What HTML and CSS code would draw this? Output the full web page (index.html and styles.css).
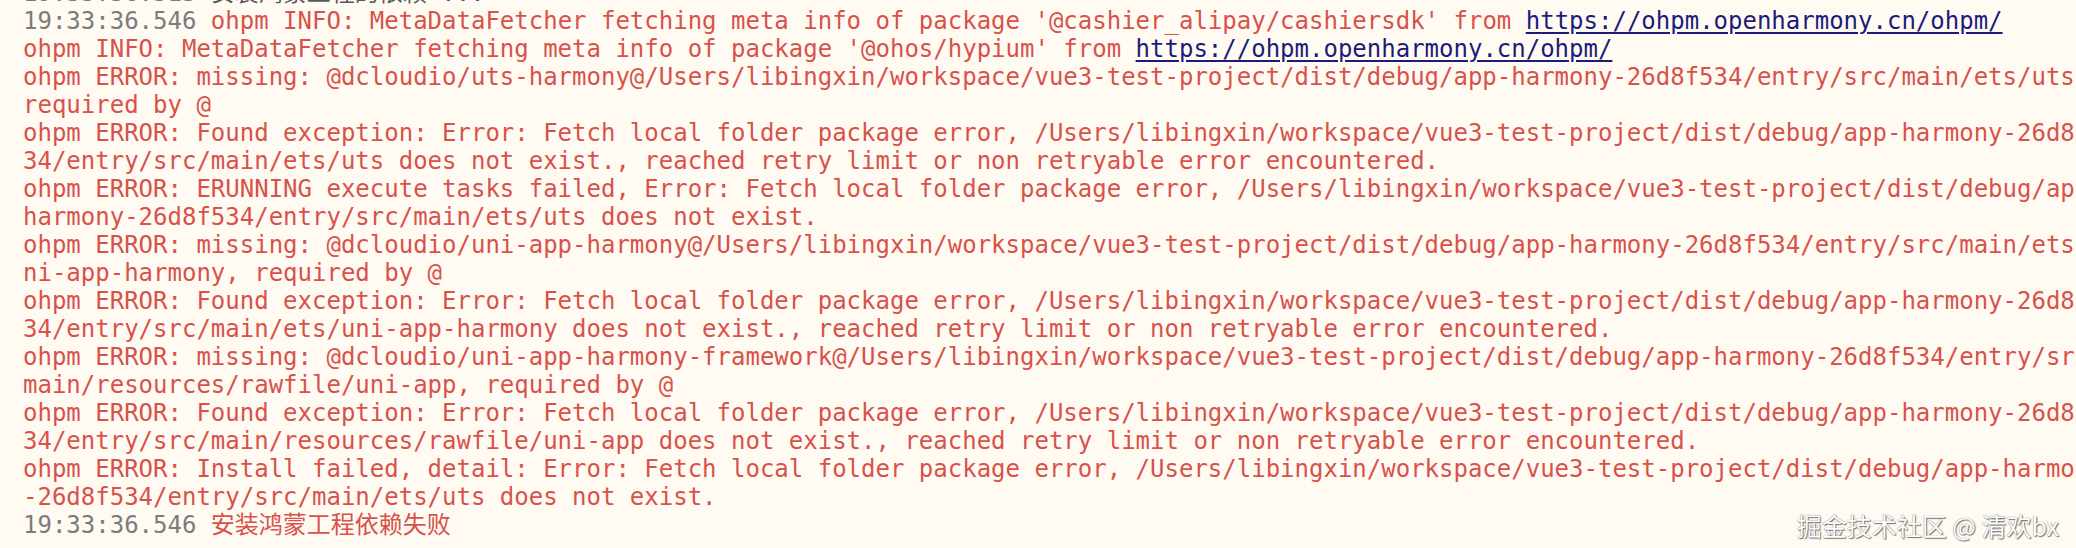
FILE: index.html
```html
<!DOCTYPE html>
<html lang="zh">
<head>
<meta charset="utf-8">
<title>console</title>
<link rel="stylesheet" href="styles.css">
</head>
<body>
<div class="console">
  <div class="log">
    <div class="line"><span class="ts">19:33:36.515 </span><span class="msg">安装鸿蒙工程的依赖 ...</span></div>
    <div class="line"><span class="ts">19:33:36.546 </span><span class="err">ohpm INFO: MetaDataFetcher fetching meta info of package '@cashier_alipay/cashiersdk' from </span><a class="link" href="#">https://ohpm.openharmony.cn/ohpm/</a></div>
    <div class="line"><span class="err">ohpm INFO: MetaDataFetcher fetching meta info of package '@ohos/hypium' from </span><a class="link" href="#">https://ohpm.openharmony.cn/ohpm/</a></div>
    <div class="line err">ohpm ERROR: missing: @dcloudio/uts-harmony@/Users/libingxin/workspace/vue3-test-project/dist/debug/app-harmony-26d8f534/entry/src/main/ets/uts, </div>
    <div class="line err">required by @</div>
    <div class="line err">ohpm ERROR: Found exception: Error: Fetch local folder package error, /Users/libingxin/workspace/vue3-test-project/dist/debug/app-harmony-26d8f5</div>
    <div class="line err">34/entry/src/main/ets/uts does not exist., reached retry limit or non retryable error encountered.</div>
    <div class="line err">ohpm ERROR: ERUNNING execute tasks failed, Error: Fetch local folder package error, /Users/libingxin/workspace/vue3-test-project/dist/debug/app-</div>
    <div class="line err">harmony-26d8f534/entry/src/main/ets/uts does not exist.</div>
    <div class="line err">ohpm ERROR: missing: @dcloudio/uni-app-harmony@/Users/libingxin/workspace/vue3-test-project/dist/debug/app-harmony-26d8f534/entry/src/main/ets/u</div>
    <div class="line err">ni-app-harmony, required by @</div>
    <div class="line err">ohpm ERROR: Found exception: Error: Fetch local folder package error, /Users/libingxin/workspace/vue3-test-project/dist/debug/app-harmony-26d8f5</div>
    <div class="line err">34/entry/src/main/ets/uni-app-harmony does not exist., reached retry limit or non retryable error encountered.</div>
    <div class="line err">ohpm ERROR: missing: @dcloudio/uni-app-harmony-framework@/Users/libingxin/workspace/vue3-test-project/dist/debug/app-harmony-26d8f534/entry/src/</div>
    <div class="line err">main/resources/rawfile/uni-app, required by @</div>
    <div class="line err">ohpm ERROR: Found exception: Error: Fetch local folder package error, /Users/libingxin/workspace/vue3-test-project/dist/debug/app-harmony-26d8f5</div>
    <div class="line err">34/entry/src/main/resources/rawfile/uni-app does not exist., reached retry limit or non retryable error encountered.</div>
    <div class="line err">ohpm ERROR: Install failed, detail: Error: Fetch local folder package error, /Users/libingxin/workspace/vue3-test-project/dist/debug/app-harmony</div>
    <div class="line err">-26d8f534/entry/src/main/ets/uts does not exist.</div>
    <div class="line"><span class="ts">19:33:36.546 </span><span class="err">安装鸿蒙工程依赖失败</span></div>
  </div>
  <div class="watermark">掘金技术社区 @ 清欢bx</div>
</div>
</body>
</html>
```
FILE: styles.css
```css
html, body {
  margin: 0;
  padding: 0;
  background: #fffbf3;
  overflow: hidden;
}

.console {
  position: relative;
  width: 2076px;
  height: 548px;
  overflow: hidden;
  background: #fffbf3;
}

.log {
  display: flex;
  flex-direction: column;
  margin-top: -21px;
  padding-left: 23px;
  font-family: "DejaVu Sans Mono", "Noto Sans CJK SC", monospace;
  font-size: 24px;
}

.line {
  height: 28px;
  line-height: 28px;
  white-space: pre;
  overflow: visible;
}

.ts {
  color: #7b7b7b;
}

.msg {
  color: #5a5a5a;
}

.err {
  color: #d8524a;
}

.link {
  color: #1c1b7a;
  text-decoration: underline;
  text-underline-offset: 3px;
}

.watermark {
  position: absolute;
  right: 17px;
  bottom: 10px;
  font-family: "Noto Sans CJK SC", sans-serif;
  font-size: 25px;
  line-height: 1;
  color: #ffffff;
  text-shadow: 0 0 1px #555, 1px 1px 1px #777;
  letter-spacing: 0;
}
```
